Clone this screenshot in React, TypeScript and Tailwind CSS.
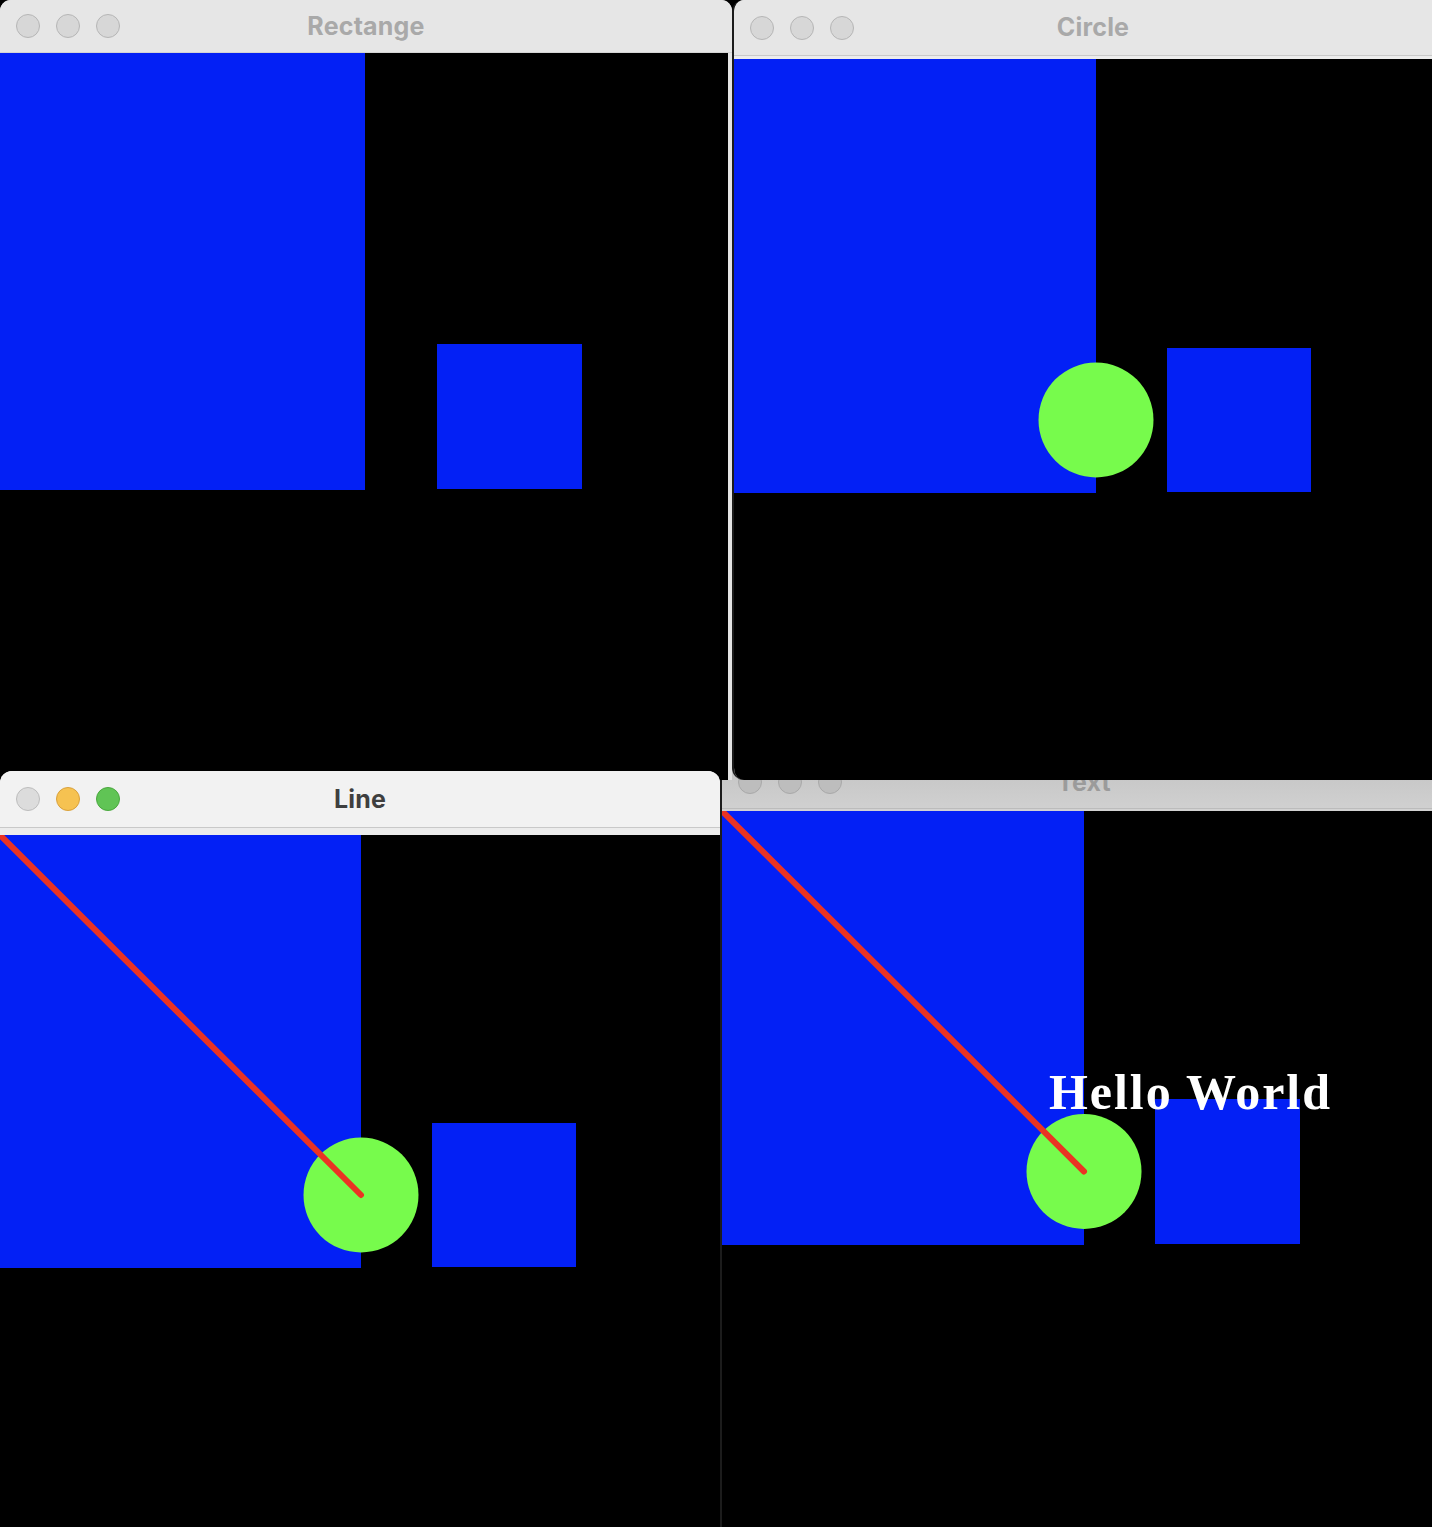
import type { ReactNode } from 'react';

const BLUE = '#0320f5';
const GREEN = '#77fb4c';
const RED = '#ea3323';

interface TitleBarProps {
    title: string;
    active?: boolean;
    className: string;
    titleClassName: string;
    dotClassName: string;
}

function TitleBar({ title, active, className, titleClassName, dotClassName }: TitleBarProps) {
    return (
        <div className={`grid grid-cols-[1fr_auto_1fr] items-center ${className}`}>
            <div className="flex items-center gap-4 pl-4">
                <span className={`h-6 w-6 rounded-full border ${dotClassName}`} />
                <span
                    className={`h-6 w-6 rounded-full border ${
                        active ? 'border-[#d9a13c] bg-[#f6c251]' : dotClassName
                    }`}
                />
                <span
                    className={`h-6 w-6 rounded-full border ${
                        active ? 'border-[#4aa83e] bg-[#60c455]' : dotClassName
                    }`}
                />
            </div>
            <span className={`font-['Inter',sans-serif] text-[25px] font-bold leading-none tracking-[0.2px] ${titleClassName}`}>
                {title}
            </span>
            <div />
        </div>
    );
}

interface SceneProps {
    width: number;
    height: number;
    // big rect size, small rect x/y/size
    big: [number, number];
    small: [number, number, number];
    circle?: boolean;
    line?: boolean;
    text?: boolean;
}

// the opencv drawing, coordinates relative to the canvas top-left
function Scene({ width, height, big, small, circle, line, text }: SceneProps) {
    const [bw, bh] = big;
    const cy = small[1] + small[2] / 2;
    return (
        <svg width={width} height={height} className="block">
            <rect x={0} y={0} width={width} height={height} fill="#000" />
            <rect x={0} y={0} width={bw} height={bh} fill={BLUE} />
            <rect x={small[0]} y={small[1]} width={small[2]} height={small[2]} fill={BLUE} />
            {circle && <circle cx={bw} cy={cy} r={57.5} fill={GREEN} />}
            {line && <line x1={0} y1={0} x2={bw} y2={cy} stroke={RED} strokeWidth={6} strokeLinecap="round" />}
            {text && (
                <text
                    x={327}
                    y={298}
                    fill="#fff"
                    fontFamily="'Liberation Serif', serif"
                    fontWeight="bold"
                    fontSize={50}
                    textLength={281}
                    lengthAdjust="spacing"
                >
                    Hello World
                </text>
            )}
        </svg>
    );
}

function Window({ className, children }: { className: string; children: ReactNode }) {
    return <div className={`absolute flex flex-col overflow-hidden ${className}`}>{children}</div>;
}

export default function App(): JSX.Element {
    return (
        <div className="relative h-[1527px] w-[1432px] overflow-hidden bg-black">
            {/* Text window, behind the others */}
            <Window className="left-[720px] top-[756px] h-[771px] w-[726px] rounded-tl-[12px] border-l-2 border-[#1c1c1c]">
                <TitleBar
                    title="Text"
                    className="h-[52px] bg-gradient-to-b from-[#c2c2c2] to-[#d0d0d0]"
                    titleClassName="text-[#9b9b9b]"
                    dotClassName="border-[#a9a9a9] bg-[#bdbdbd]"
                />
                <div className="h-px bg-[#bcbcbc]" />
                <div className="h-[2px] bg-[#d2d2d2]" />
                <Scene width={711} height={716} big={[362, 434]} small={[433, 288, 145]} circle line text />
            </Window>

            {/* Rectange window */}
            <Window className="left-0 top-0 h-[780px] w-[732px] rounded-t-[11px] bg-[#e6e6e6]">
                <TitleBar
                    title="Rectange"
                    className="h-[52px] bg-[#e6e6e6]"
                    titleClassName="text-[#a9a9a9]"
                    dotClassName="border-[#b6b6b6] bg-[#d7d7d7]"
                />
                <div className="h-px bg-[#d4d4d4]" />
                <div className="flex">
                    <Scene width={728} height={727} big={[365, 437]} small={[437, 291, 145]} />
                    <div className="w-1 bg-[#e4e4e4]" />
                </div>
            </Window>

            {/* Circle window */}
            <Window className="left-[732px] top-0 h-[780px] w-[720px] rounded-l-[12px] border-l-2 border-[#1c1c1c] bg-[#e6e6e6]">
                <TitleBar
                    title="Circle"
                    className="h-[55px] bg-[#e6e6e6]"
                    titleClassName="text-[#a9a9a9]"
                    dotClassName="border-[#b6b6b6] bg-[#d7d7d7]"
                />
                <div className="h-px bg-[#c9c9c9]" />
                <div className="h-[3px] bg-[#ececec]" />
                <Scene width={718} height={721} big={[362, 434]} small={[433, 289, 144]} circle />
            </Window>

            {/* Line window, active */}
            <Window className="left-0 top-[771px] h-[756px] w-[720px] rounded-t-[12px] bg-[#f2f2f2]">
                <TitleBar
                    title="Line"
                    active
                    className="h-[56px] bg-[#f2f2f2]"
                    titleClassName="text-[#3f3f3f]"
                    dotClassName="border-[#bdbdbd] bg-[#dcdcdc]"
                />
                <div className="h-px bg-[#c9c9c9]" />
                <div className="h-[7px] bg-[#ececec]" />
                <Scene width={720} height={692} big={[361, 433]} small={[432, 288, 144]} circle line />
            </Window>
        </div>
    );
}
